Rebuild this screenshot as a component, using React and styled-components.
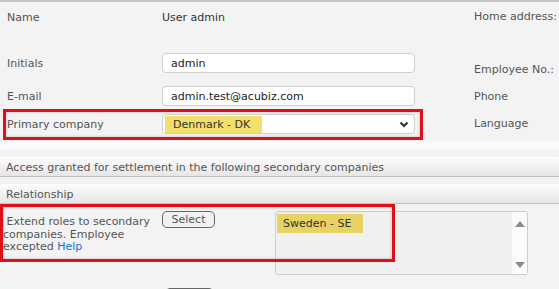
import React from "react";
import styled, { createGlobalStyle } from "styled-components";

const GlobalStyle = createGlobalStyle`
  html, body {
    margin: 0;
    padding: 0;
    background: #f3f3f3;
    overflow: hidden;
  }
  body {
    font-family: "DejaVu Sans", Verdana, sans-serif;
    font-size: 11px;
    color: #555;
  }
`;

const Page = styled.div`
  position: relative;
  width: 559px;
  height: 289px;
  overflow: hidden;
  border-top: 2px solid #c6c6c6;
  box-sizing: border-box;
`;

const TopSection = styled.div`
  display: flex;
`;

const LeftForm = styled.div`
  width: 474px;
  display: flex;
  flex-direction: column;
`;

const Row = styled.div`
  display: grid;
  grid-template-columns: 155px 253px;
  align-items: center;
  height: 20px;
  margin-top: ${(p) => p.$mt}px;
  padding-left: 7px;
`;

const Label = styled.div`
  color: #555;
  white-space: nowrap;
`;

const Value = styled.div`
  color: #333;
`;

const Input = styled.div`
  height: 20px;
  box-sizing: border-box;
  background: #fff;
  border: 1px solid #cfcfcf;
  border-radius: 4px;
  padding: 0 8px;
  display: flex;
  align-items: center;
  color: #222;
`;

const SelectBox = styled(Input)`
  padding: 0 5px 0 2px;
  justify-content: space-between;
`;

const Highlight = styled.span`
  background: ${(p) => p.$bg || "#f3df6c"};
  color: #333;
  padding: ${(p) => p.$pad || "2px 8px 2px 8px"};
  display: inline-block;
  width: ${(p) => p.$w}px;
  box-sizing: border-box;
`;

const RightCol = styled.div`
  display: flex;
  flex-direction: column;
`;

const RightItem = styled.div`
  height: 20px;
  line-height: 20px;
  margin-top: ${(p) => p.$mt}px;
  white-space: nowrap;
  color: #555;
`;

const BottomStrip = styled.div`
  height: 9px;
  margin-top: 7px;
  background: #fafafa;
  border-radius: 0 0 4px 4px;
`;

const Bar = styled.div`
  height: 20px;
  box-sizing: border-box;
  margin-top: ${(p) => p.$mt}px;
  padding-left: 6px;
  display: flex;
  align-items: center;
  background: linear-gradient(#fbfbfb, #e6e6e6);
  border-top: 1px solid #fff;
  border-bottom: 1px solid #c2c2c2;
  border-radius: 3px 3px 0 0;
  color: #555;
  white-space: nowrap;
`;

const RelRow = styled.div`
  display: grid;
  grid-template-columns: 159px 113px 253px;
  padding-left: 3px;
  padding-top: 7px;
`;

const RelLabel = styled.div`
  padding-top: 5px;
  line-height: 12.5px;
  width: 152px;
`;

const HelpLink = styled.a`
  color: #1570d6;
  text-decoration: none;
`;

const Button = styled.button`
  font: inherit;
  color: #555;
  background: #f1f1f1;
  border: 1px solid #666;
  border-radius: 5px;
  height: 17px;
  width: ${(p) => p.$w || 53}px;
  padding: 0;
  line-height: 14px;
  margin-left: ${(p) => p.$ml || 0}px;
`;

const ListBox = styled.div`
  height: 64px;
  box-sizing: border-box;
  border: 1px solid #cdcdcd;
  border-radius: 3px;
  background: #f0f0f0;
  display: flex;
  justify-content: space-between;
`;

const ListItems = styled.div`
  padding: 2px 0 0 1px;
`;

const ScrollTrack = styled.div`
  width: 15px;
  background: #fbfbfb;
  display: flex;
  flex-direction: column;
  justify-content: space-between;
  align-items: center;
  padding: 9px 0 6px;
`;

const Arrow = styled.div`
  width: 0;
  height: 0;
  border-left: 5px solid transparent;
  border-right: 5px solid transparent;
  ${(p) =>
    p.$down
      ? "border-top: 6px solid #8a8a8a;"
      : "border-bottom: 6px solid #8a8a8a;"}
`;

const NextRow = styled.div`
  display: grid;
  grid-template-columns: 162px 111px 1fr;
  padding-left: 7px;
  margin-top: 13px;
  align-items: start;
`;

const VisitedLink = styled.span`
  color: #6a3f8f;
`;

const RedBox = styled.div`
  position: absolute;
  left: ${(p) => p.$x}px;
  top: ${(p) => p.$y}px;
  width: ${(p) => p.$w}px;
  height: ${(p) => p.$h}px;
  box-sizing: border-box;
  border: 3px solid #e0101a;
  box-shadow: inset 0 0 3px rgba(0, 0, 0, 0.25);
  pointer-events: none;
`;

const Chevron = () => (
  <svg width="10" height="7" viewBox="0 0 10 7">
    <path d="M1.5 1.5 L5 5 L8.5 1.5" fill="none" stroke="#333" strokeWidth="2.2" />
  </svg>
);

export default function App() {
  return (
    <>
      <GlobalStyle />
      <Page>
        <TopSection>
          <LeftForm>
            <Row $mt={5}>
              <Label>Name</Label>
              <Value>User admin</Value>
            </Row>
            <Row $mt={26}>
              <Label>Initials</Label>
              <Input>admin</Input>
            </Row>
            <Row $mt={13}>
              <Label>E-mail</Label>
              <Input>admin.test@acubiz.com</Input>
            </Row>
            <Row $mt={8}>
              <Label>Primary company</Label>
              <SelectBox>
                <Highlight $w={97}>Denmark - DK</Highlight>
                <Chevron />
              </SelectBox>
            </Row>
          </LeftForm>
          <RightCol>
            <RightItem $mt={5}>Home address:</RightItem>
            <RightItem $mt={33}>Employee No.:</RightItem>
            <RightItem $mt={7}>Phone</RightItem>
            <RightItem $mt={7}>Language</RightItem>
          </RightCol>
        </TopSection>
        <BottomStrip />
        <Bar $mt={7}>Access granted for settlement in the following secondary companies</Bar>
        <Bar $mt={7}>Relationship</Bar>
        <RelRow>
          <RelLabel>
            &nbsp;Extend roles to secondary companies. Employee excepted{" "}
            <HelpLink href="#">Help</HelpLink>
          </RelLabel>
          <div>
            <Button>Select</Button>
          </div>
          <ListBox>
            <ListItems>
              <Highlight $bg="#e7d264" $w={86} $pad="3px 6px">
                Sweden - SE
              </Highlight>
            </ListItems>
            <ScrollTrack>
              <Arrow />
              <Arrow $down />
            </ScrollTrack>
          </ListBox>
        </RelRow>
        <NextRow>
          <Label>Approver</Label>
          <div>
            <Button $ml={-4} $w={49}>Select</Button>
          </div>
          <VisitedLink>Help</VisitedLink>
        </NextRow>
        <RedBox $x={3} $y={107} $w={420} $h={31} />
        <RedBox $x={0} $y={202} $w={395} $h={58} />
      </Page>
    </>
  );
}
